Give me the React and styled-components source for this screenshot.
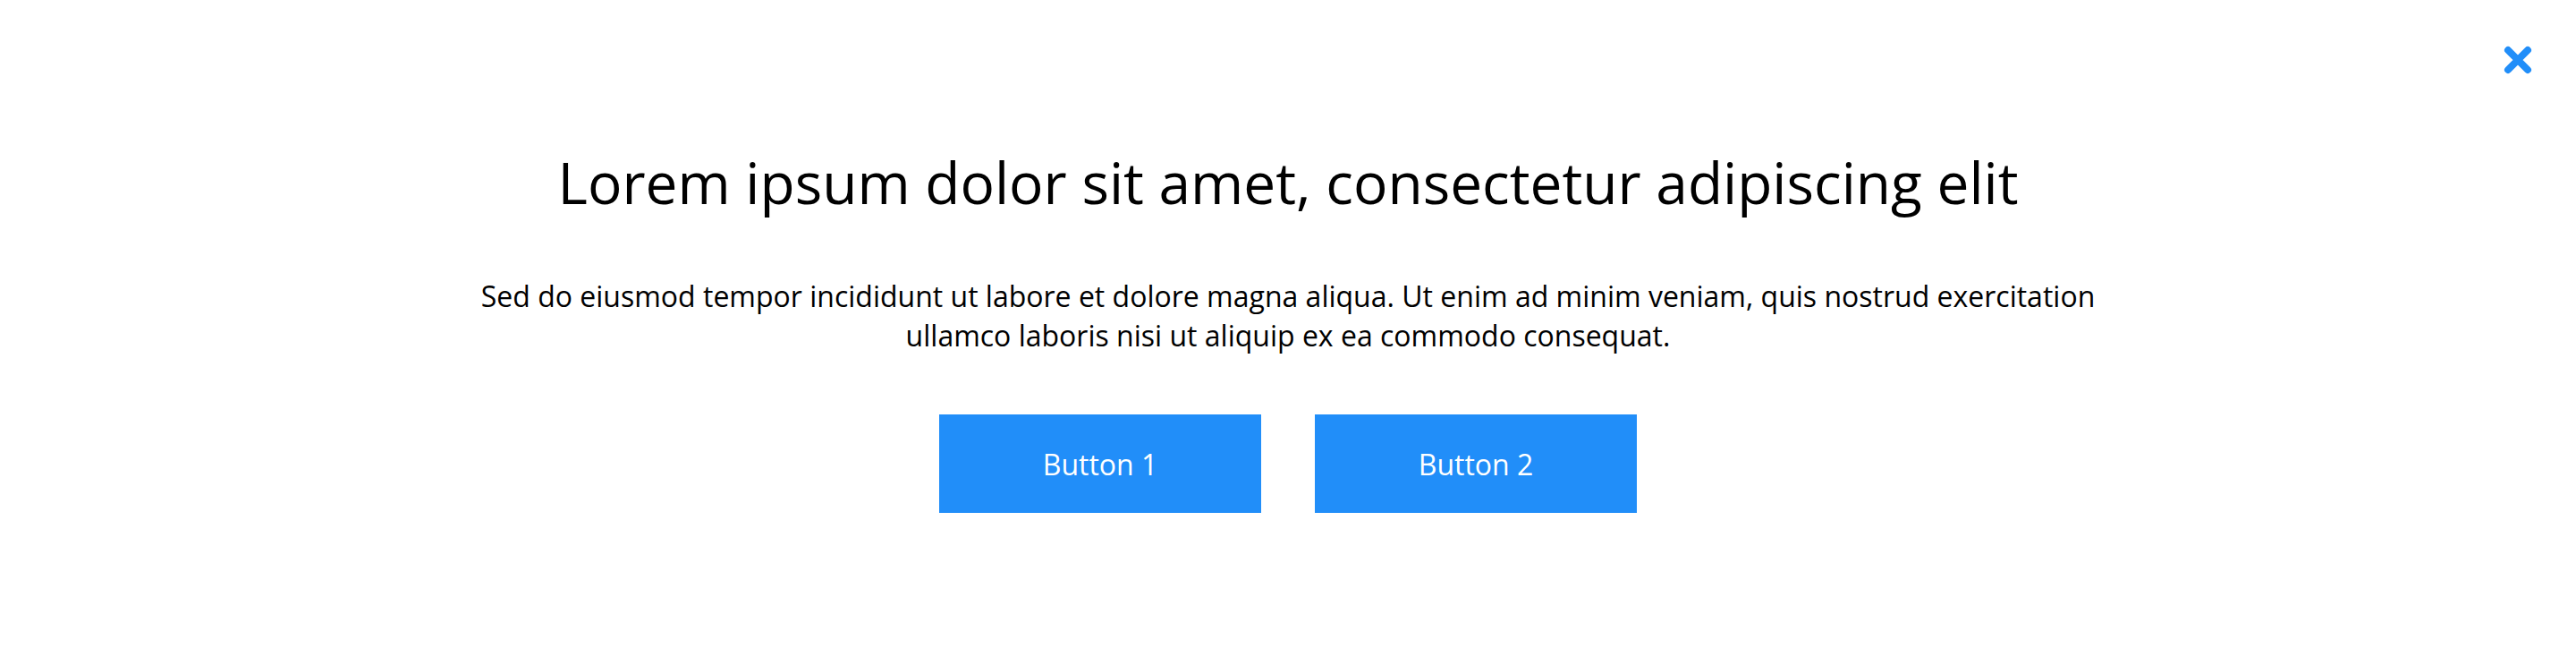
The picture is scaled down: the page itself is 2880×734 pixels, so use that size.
import React from 'react';
import styled, { createGlobalStyle } from 'styled-components';

const GlobalStyle = createGlobalStyle`
  html, body {
    margin: 0;
    padding: 0;
    background: #ffffff;
  }
  body {
    font-family: 'Open Sans', 'Liberation Sans', sans-serif;
  }
`;

const App = () => {
  return (
    <>
      <GlobalStyle />
      <Wrap>
        <CloseBtn aria-label="close">
          <svg width="34" height="34" viewBox="0 0 34 34">
            <path
              d="M6 6 L28 28 M28 6 L6 28"
              stroke="#218ef9"
              strokeWidth="8"
              strokeLinecap="round"
              fill="none"
            />
          </svg>
        </CloseBtn>
        <Title>Lorem ipsum dolor sit amet, consectetur adipiscing elit</Title>
        <Text>
          Sed do eiusmod tempor incididunt ut labore et dolore magna aliqua. Ut enim ad minim veniam, quis nostrud exercitation
          ullamco laboris nisi ut aliquip ex ea commodo consequat.
        </Text>
        <Buttons>
          <Button>Button 1</Button>
          <Button>Button 2</Button>
        </Buttons>
      </Wrap>
    </>
  );
};

const Wrap = styled.div`
  position: relative;
  display: flex;
  flex-direction: column;
  align-items: center;
  height: 734px;
  box-sizing: border-box;
  padding-top: 160px;
`;

const CloseBtn = styled.button`
  position: absolute;
  top: 50px;
  right: 48px;
  width: 34px;
  height: 34px;
  padding: 0;
  border: none;
  background: none;
  cursor: pointer;
`;

const Title = styled.h1`
  margin: 0;
  font-family: 'Open Sans', sans-serif;
  font-weight: 400;
  font-size: 64px;
  line-height: 88px;
  color: #000000;
  text-align: center;
`;

const Text = styled.p`
  margin: 61px 0 0;
  max-width: 1850px;
  font-family: 'Open Sans', sans-serif;
  font-size: 32px;
  line-height: 44px;
  color: #000000;
  text-align: center;
`;

const Buttons = styled.div`
  display: flex;
  gap: 60px;
  margin-top: 66px;
`;

const Button = styled.button`
  width: 360px;
  height: 110px;
  background: #218ef9;
  border: none;
  border-radius: 0;
  font-family: 'Open Sans', sans-serif;
  font-size: 32px;
  color: #ffffff;
  cursor: pointer;
`;

export default App;
